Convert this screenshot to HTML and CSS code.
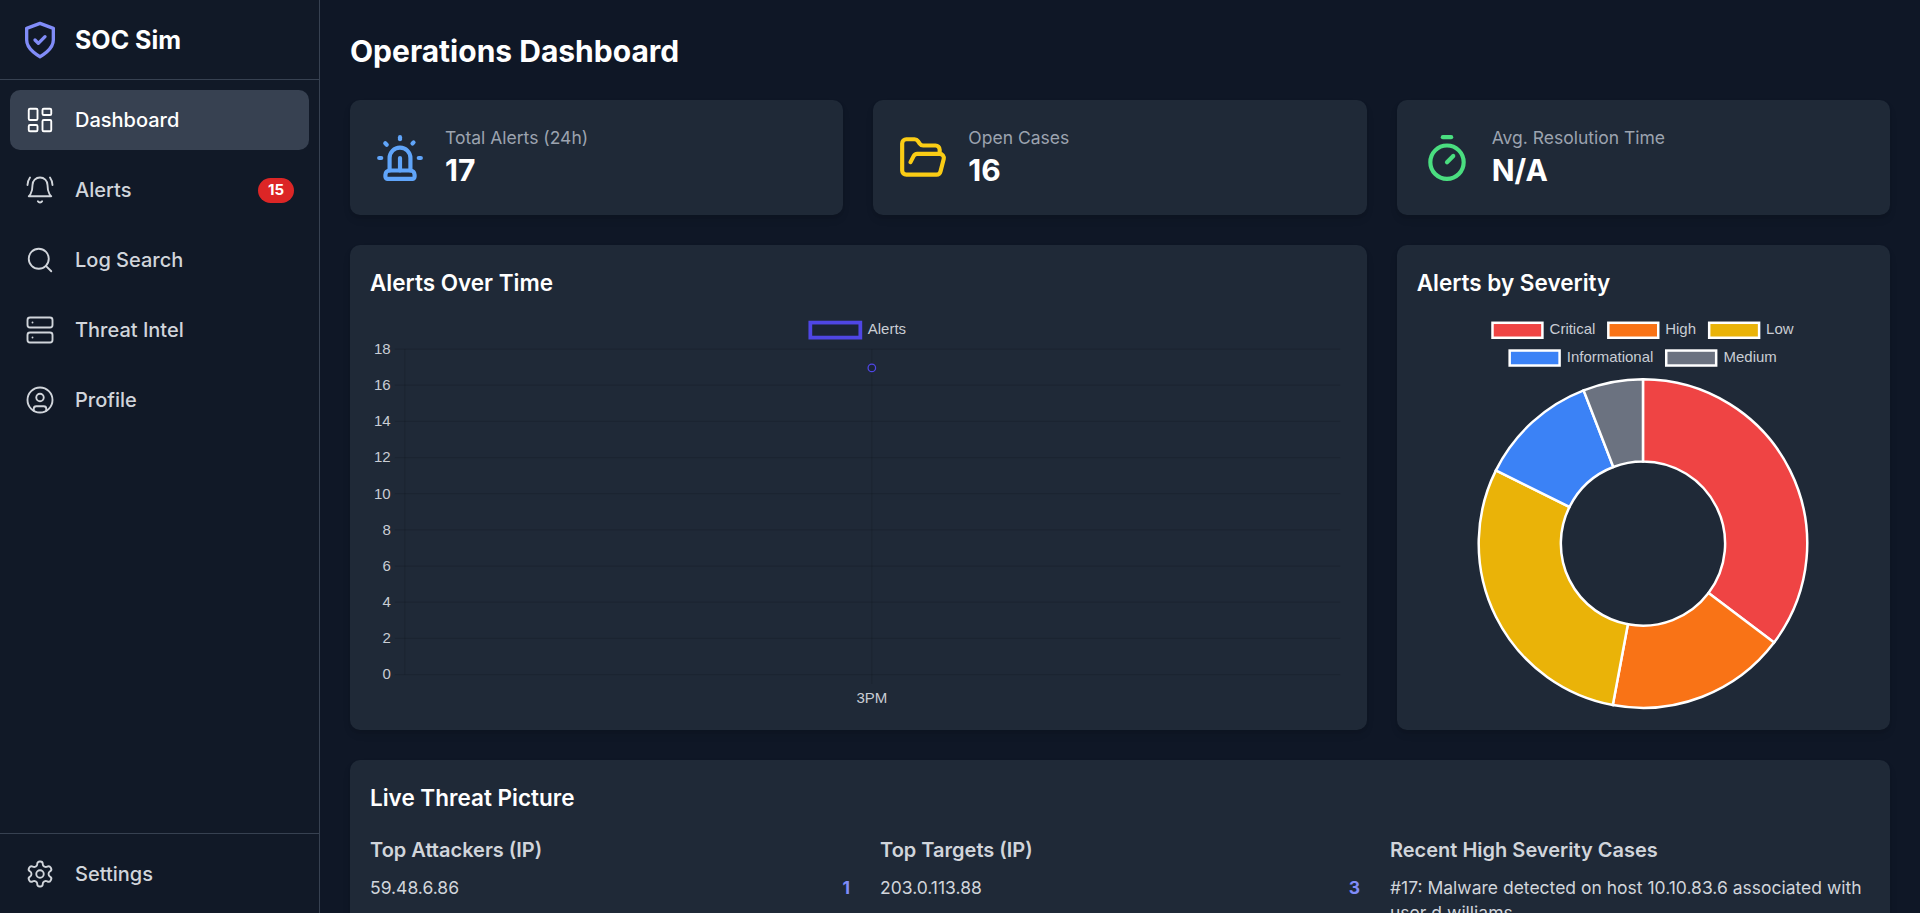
FILE: index.html
```html
<!DOCTYPE html>
<html lang="en">
<head>
    <meta charset="UTF-8">
    <title>SOC Sim</title>
    <link rel="stylesheet" href="styles.css">
</head>
<body>
<div class="app">
    <aside class="sidebar">
        <div class="brand">
            <svg class="brand_icon" viewBox="0 0 24 24"><path d="M12 22s8-4 8-10V5l-8-3-8 3v7c0 6 8 10 8 10"/><path d="m9 12 2 2 4-4"/></svg>
            <span class="brand_name">SOC Sim</span>
        </div>
        <nav class="nav">
            <a class="nav_item active">
                <svg class="nav_icon" viewBox="0 0 24 24"><rect x="3" y="3" width="7" height="9" rx="1"/><rect x="14" y="3" width="7" height="5" rx="1"/><rect x="14" y="12" width="7" height="9" rx="1"/><rect x="3" y="16" width="7" height="5" rx="1"/></svg>
                <span>Dashboard</span>
            </a>
            <a class="nav_item">
                <svg class="nav_icon" viewBox="0 0 24 24"><path d="M6 8a6 6 0 0 1 12 0c0 7 3 9 3 9H3s3-2 3-9"/><path d="M10.3 21a1.94 1.94 0 0 0 3.4 0"/><path d="M4 2C2.8 3.7 2 5.7 2 8"/><path d="M22 8c0-2.3-.8-4.3-2-6"/></svg>
                <span>Alerts</span>
                <span class="badge">15</span>
            </a>
            <a class="nav_item">
                <svg class="nav_icon" viewBox="0 0 24 24"><circle cx="11" cy="11" r="8"/><path d="m21 21-4.3-4.3"/></svg>
                <span>Log Search</span>
            </a>
            <a class="nav_item">
                <svg class="nav_icon" viewBox="0 0 24 24"><rect x="2" y="2" width="20" height="8" rx="2"/><rect x="2" y="14" width="20" height="8" rx="2"/><path d="M6 6h.01"/><path d="M6 18h.01"/></svg>
                <span>Threat Intel</span>
            </a>
            <a class="nav_item">
                <svg class="nav_icon" viewBox="0 0 24 24"><circle cx="12" cy="12" r="10"/><circle cx="12" cy="10" r="3"/><path d="M7 20.662V19a2 2 0 0 1 2-2h6a2 2 0 0 1 2 2v1.662"/></svg>
                <span>Profile</span>
            </a>
        </nav>
        <div class="sidebar_foot">
            <a class="nav_item">
                <svg class="nav_icon" viewBox="0 0 24 24"><path d="M12.22 2h-.44a2 2 0 0 0-2 2v.18a2 2 0 0 1-1 1.73l-.43.25a2 2 0 0 1-2 0l-.15-.08a2 2 0 0 0-2.73.73l-.22.38a2 2 0 0 0 .73 2.73l.15.1a2 2 0 0 1 1 1.72v.51a2 2 0 0 1-1 1.74l-.15.09a2 2 0 0 0-.73 2.73l.22.38a2 2 0 0 0 2.73.73l.15-.08a2 2 0 0 1 2 0l.43.25a2 2 0 0 1 1 1.73V20a2 2 0 0 0 2 2h.44a2 2 0 0 0 2-2v-.18a2 2 0 0 1 1-1.73l.43-.25a2 2 0 0 1 2 0l.15.08a2 2 0 0 0 2.73-.73l.22-.39a2 2 0 0 0-.73-2.73l-.15-.08a2 2 0 0 1-1-1.74v-.5a2 2 0 0 1 1-1.74l.15-.09a2 2 0 0 0 .73-2.73l-.22-.38a2 2 0 0 0-2.73-.73l-.15.08a2 2 0 0 1-2 0l-.43-.25a2 2 0 0 1-1-1.73V4a2 2 0 0 0-2-2z"/><circle cx="12" cy="12" r="3"/></svg>
                <span>Settings</span>
            </a>
        </div>
    </aside>

    <main class="main">
        <h1 class="page_title">Operations Dashboard</h1>

        <section class="stats">
            <div class="card stat">
                <svg class="stat_icon blue" viewBox="0 0 24 24"><path d="M7 18v-6a5 5 0 1 1 10 0v6"/><path d="M5 21a1 1 0 0 0 1 1h12a1 1 0 0 0 1-1v-1a2 2 0 0 0-2-2H7a2 2 0 0 0-2 2z"/><path d="M21 12h1"/><path d="M18.5 4.5 18 5"/><path d="M2 12h1"/><path d="M12 2v1"/><path d="m4.929 4.929.707.707"/><path d="M12 12v6"/></svg>
                <div>
                    <p class="stat_label">Total Alerts (24h)</p>
                    <p class="stat_value">17</p>
                </div>
            </div>
            <div class="card stat">
                <svg class="stat_icon yellow" viewBox="0 0 24 24"><path d="m6 14 1.5-2.9A2 2 0 0 1 9.24 10H20a2 2 0 0 1 1.94 2.5l-1.54 6a2 2 0 0 1-1.95 1.5H4a2 2 0 0 1-2-2V5a2 2 0 0 1 2-2h3.9a2 2 0 0 1 1.69.9l.81 1.2a2 2 0 0 0 1.67.9H18a2 2 0 0 1 2 2v2"/></svg>
                <div>
                    <p class="stat_label">Open Cases</p>
                    <p class="stat_value">16</p>
                </div>
            </div>
            <div class="card stat">
                <svg class="stat_icon green" viewBox="0 0 24 24"><path d="M10 2h4"/><path d="m12 14 3-3"/><circle cx="12" cy="14" r="8"/></svg>
                <div>
                    <p class="stat_label">Avg. Resolution Time</p>
                    <p class="stat_value">N/A</p>
                </div>
            </div>
        </section>

        <section class="charts">
            <div class="card chart_card wide">
                <h2 class="card_title">Alerts Over Time</h2>
                <svg class="chart" viewBox="0 0 976 390">
                    <rect class="legend_line" x="440" y="2.6" width="50" height="15"/>
                    <text class="chart_text" x="497.4" y="14">Alerts</text>
                    <g class="grid">
                        <path d="M24.5 29H970"/>
                        <path d="M24.5 65.2H970"/>
                        <path d="M24.5 101.3H970"/>
                        <path d="M24.5 137.5H970"/>
                        <path d="M24.5 173.6H970"/>
                        <path d="M24.5 209.8H970"/>
                        <path d="M24.5 246H970"/>
                        <path d="M24.5 282.1H970"/>
                        <path d="M24.5 318.3H970"/>
                        <path d="M24.5 354.5H970"/>
                        <path d="M34.5 29V354.5"/>
                        <path d="M501.5 29V364"/>
                    </g>
                    <g class="chart_text ticks">
                        <text x="20.4" y="34.2">18</text>
                        <text x="20.4" y="70">16</text>
                        <text x="20.4" y="106.2">14</text>
                        <text x="20.4" y="142.2">12</text>
                        <text x="20.4" y="178.6">10</text>
                        <text x="20.4" y="214.6">8</text>
                        <text x="20.4" y="250.8">6</text>
                        <text x="20.4" y="286.8">4</text>
                        <text x="20.4" y="323">2</text>
                        <text x="20.4" y="359.2">0</text>
                    </g>
                    <circle class="point" cx="501.5" cy="47.9" r="3.75"/>
                    <text class="chart_text middle" x="501.5" y="382.5">3PM</text>
                </svg>
            </div>
            <div class="card chart_card">
                <h2 class="card_title">Alerts by Severity</h2>
                <svg class="chart" viewBox="0 0 454 390">
                    <g class="legend_box">
                        <rect class="red" x="75.6" y="2.5" width="50" height="15"/>
                        <rect class="orange" x="191.6" y="2.5" width="50" height="15"/>
                        <rect class="gold" x="292.6" y="2.5" width="50" height="15"/>
                        <rect class="sky" x="92.8" y="30.3" width="50" height="15"/>
                        <rect class="slate" x="249.6" y="30.3" width="50" height="15"/>
                    </g>
                    <text class="chart_text" x="132.8" y="14">Critical</text>
                    <text class="chart_text" x="248.6" y="14">High</text>
                    <text class="chart_text" x="349.6" y="14">Low</text>
                    <text class="chart_text" x="150" y="41.8">Informational</text>
                    <text class="chart_text" x="307" y="41.8">Medium</text>
                    <g class="donut" transform="translate(226.3 223.6)">
                        <path class="red" d="M0 -164.5A164.5 164.5 0 0 1 131.27 99.14L65.64 49.57A82.25 82.25 0 0 0 0 -82.25Z"/>
                        <path class="orange" d="M131.27 99.14A164.5 164.5 0 0 1 -30.22 161.71L-15.11 80.85A82.25 82.25 0 0 0 65.64 49.57Z"/>
                        <path class="gold" d="M-30.22 161.71A164.5 164.5 0 0 1 -147.26 -73.32L-73.63 -36.66A82.25 82.25 0 0 0 -15.11 80.85Z"/>
                        <path class="sky" d="M-147.26 -73.32A164.5 164.5 0 0 1 -59.42 -153.4L-29.71 -76.7A82.25 82.25 0 0 0 -73.63 -36.66Z"/>
                        <path class="slate" d="M-59.42 -153.4A164.5 164.5 0 0 1 0 -164.5L0 -82.25A82.25 82.25 0 0 0 -29.71 -76.7Z"/>
                    </g>
                </svg>
            </div>
        </section>

        <section class="card threat">
            <h2 class="card_title">Live Threat Picture</h2>
            <div class="threat_cols">
                <div>
                    <h3 class="threat_head">Top Attackers (IP)</h3>
                    <div class="threat_row"><span>59.48.6.86</span><span class="count">1</span></div>
                </div>
                <div>
                    <h3 class="threat_head">Top Targets (IP)</h3>
                    <div class="threat_row"><span>203.0.113.88</span><span class="count">3</span></div>
                </div>
                <div>
                    <h3 class="threat_head">Recent High Severity Cases</h3>
                    <p class="threat_row">#17: Malware detected on host 10.10.83.6 associated with user d.williams</p>
                </div>
            </div>
        </section>
    </main>
</div>
</body>
</html>
```
FILE: styles.css
```css
* {
    padding: 0;
    margin: 0;
    box-sizing: border-box;
}
body {
    font-family: "Inter", "Liberation Sans", sans-serif;
    background-color: #0f1726;
    color: #d1d5db;
    overflow: hidden;
}
.app {
    display: flex;
    height: 100vh;
}

/* sidebar */
.sidebar {
    width: 320px;
    flex-shrink: 0;
    display: flex;
    flex-direction: column;
    background-color: #111927;
    border-right: 1px solid #374151;
}
.brand {
    height: 80px;
    flex-shrink: 0;
    display: flex;
    align-items: center;
    gap: 15px;
    padding-left: 20px;
    border-bottom: 1px solid #374151;
}
.brand_icon {
    width: 40px;
    height: 40px;
    fill: none;
    stroke: #818cf8;
    stroke-width: 2;
    stroke-linecap: round;
    stroke-linejoin: round;
}
.brand_name {
    font-size: 25px;
    font-weight: 700;
    color: #fff;
}
.nav {
    flex: 1;
    padding: 10px;
}
.nav_item {
    height: 60px;
    display: flex;
    align-items: center;
    gap: 20px;
    padding: 0 15px;
    margin-bottom: 10px;
    border-radius: 10px;
    font-size: 20px;
    font-weight: 500;
    color: #d1d5db;
}
.nav_item.active {
    background-color: #374151;
    color: #fff;
}
.nav_icon {
    width: 30px;
    height: 30px;
    flex-shrink: 0;
    fill: none;
    stroke: currentColor;
    stroke-width: 1.5;
    stroke-linecap: round;
    stroke-linejoin: round;
}
.badge {
    margin-left: auto;
    padding: 2.5px 10px;
    border-radius: 999px;
    background-color: #dc2626;
    color: #fff;
    font-size: 15px;
    font-weight: 700;
    line-height: 20px;
}
.sidebar_foot {
    padding: 10px 10px 9px;
    border-top: 1px solid #374151;
}
.sidebar_foot .nav_item {
    margin-bottom: 0;
}

/* main */
.main {
    flex: 1;
    min-width: 0;
    padding: 30px;
    overflow: hidden;
}
.page_title {
    font-size: 30px;
    line-height: 43px;
    font-weight: 700;
    color: #fff;
    margin-bottom: 27px;
}
.card {
    background-color: #1f2937;
    border-radius: 10px;
    box-shadow: 0 5px 8px -1px rgba(0, 0, 0, 0.1), 0 2px 5px -2px rgba(0, 0, 0, 0.1);
}
.card_title {
    font-size: 22.5px;
    line-height: 35px;
    font-weight: 600;
    color: #fff;
    margin-bottom: 20px;
}

.stats {
    display: grid;
    grid-template-columns: repeat(3, 1fr);
    gap: 30px;
    margin-bottom: 30px;
}
.stat {
    display: flex;
    align-items: center;
    gap: 20px;
    padding: 25px;
}
.stat_icon {
    width: 50px;
    height: 50px;
    flex-shrink: 0;
    fill: none;
    stroke-width: 2;
    stroke-linecap: round;
    stroke-linejoin: round;
}
.blue { stroke: #60a5fa; }
.yellow { stroke: #facc15; }
.green { stroke: #4ade80; }
.stat_label {
    font-size: 17.5px;
    line-height: 25px;
    color: #9ca3af;
}
.stat_value {
    font-size: 30px;
    line-height: 40px;
    font-weight: 700;
    color: #fff;
}

.charts {
    display: grid;
    grid-template-columns: repeat(3, 1fr);
    gap: 30px;
    margin-bottom: 30px;
}
.chart_card {
    padding: 20px;
}
.chart_card.wide {
    grid-column: span 2;
}
.chart {
    display: block;
    width: 100%;
    height: 390px;
}
.chart_text {
    font-family: "Liberation Sans", sans-serif;
    font-size: 15px;
    fill: #c9cdd4;
}
.ticks {
    text-anchor: end;
}
.middle {
    text-anchor: middle;
}
.grid path {
    stroke: rgba(0, 0, 0, 0.1);
    stroke-width: 1.25;
    fill: none;
}
.legend_line {
    fill: #1b2436;
    stroke: #4f46e5;
    stroke-width: 3.75;
}
.point {
    fill: #1b2436;
    stroke: #4f46e5;
    stroke-width: 1.25;
}
.legend_box rect,
.donut path {
    stroke: #fff;
    stroke-width: 2.5;
}
.red { fill: #ef4444; }
.orange { fill: #f97316; }
.gold { fill: #eab308; }
.sky { fill: #3b82f6; }
.slate { fill: #6b7280; }

.threat {
    padding: 20px;
}
.threat_cols {
    display: grid;
    grid-template-columns: repeat(3, 1fr);
    gap: 30px;
}
.threat_head {
    font-size: 20px;
    line-height: 30px;
    font-weight: 600;
    color: #d1d5db;
    margin-bottom: 10px;
}
.threat_row {
    display: flex;
    justify-content: space-between;
    font-size: 17.5px;
    line-height: 25px;
    color: #d1d5db;
}
.count {
    font-weight: 700;
    color: #818cf8;
}
```
